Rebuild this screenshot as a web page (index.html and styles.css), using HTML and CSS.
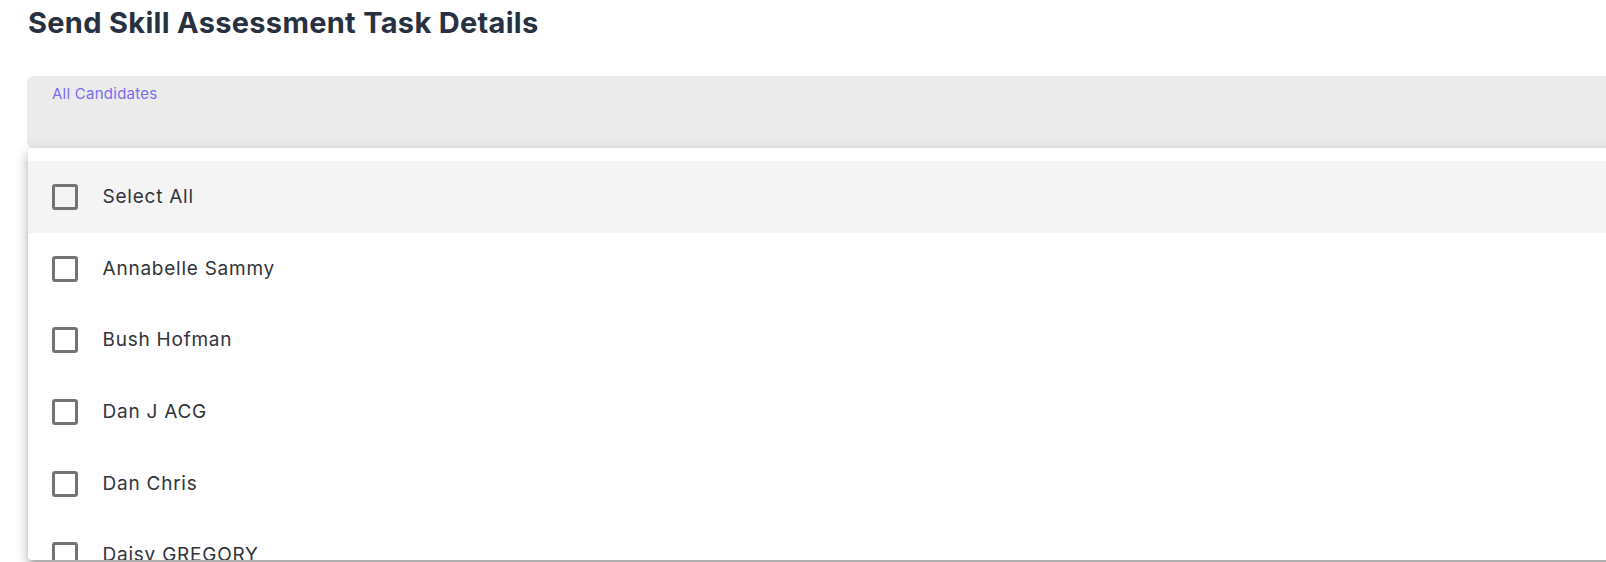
FILE: index.html
```html
<!DOCTYPE html>
<html lang="en">
<head>
<meta charset="utf-8">
<title>Send Skill Assessment Task Details</title>
<link rel="stylesheet" href="styles.css">
</head>
<body>
<main class="page">
  <h1 class="title">Send Skill Assessment Task Details</h1>
  <div class="field">
    <label class="field-label">All Candidates</label>
  </div>
  <div class="menu">
    <ul class="menu-list">
      <li class="option option-hover"><span class="checkbox"></span><span class="option-text">Select All</span></li>
      <li class="option"><span class="checkbox"></span><span class="option-text">Annabelle Sammy</span></li>
      <li class="option"><span class="checkbox"></span><span class="option-text">Bush Hofman</span></li>
      <li class="option"><span class="checkbox"></span><span class="option-text">Dan J ACG</span></li>
      <li class="option"><span class="checkbox"></span><span class="option-text">Dan Chris</span></li>
      <li class="option"><span class="checkbox"></span><span class="option-text">Daisy GREGORY</span></li>
    </ul>
  </div>
</main>
</body>
</html>
```

FILE: styles.css
```css
* { box-sizing: border-box; }

html, body {
  margin: 0;
  padding: 0;
  background: #ffffff;
  overflow: hidden;
  height: 562px;
}

body {
  font-family: Inter, "Noto Sans", "Liberation Sans", sans-serif;
}

.page {
  position: relative;
  padding: 5px 0 0 28px;
  height: 562px;
}

.title {
  margin: 0;
  font-size: 29px;
  line-height: 36px;
  font-weight: 700;
  color: #283142;
  letter-spacing: 0.3px;
}

.field {
  margin-top: 35px;
  margin-left: -1px;
  height: 72px;
  width: 1600px;
  background: #ebebeb;
  border-radius: 6px 0 0 6px;
  padding: 8px 0 0 25px;
}

.field-label {
  display: block;
  font-size: 15px;
  line-height: 20px;
  color: #7b6cf0;
  letter-spacing: 0.25px;
}

.menu {
  position: absolute;
  left: 28px;
  top: 148px;
  width: 1600px;
  height: 412px;
  background: #ffffff;
  border-radius: 4px;
  box-shadow: 0px 5px 5px -3px rgba(0,0,0,0.2), 0px 8px 10px 1px rgba(0,0,0,0.14), 0px 3px 14px 2px rgba(0,0,0,0.12);
  overflow: hidden;
}

.menu-list {
  list-style: none;
  margin: 0;
  padding: 13px 0 0 0;
}

.option {
  display: flex;
  align-items: center;
  height: 71.7px;
  padding-left: 24px;
  gap: 24.6px;
}

.option-hover {
  background: #f4f4f4;
}

.checkbox {
  flex: none;
  width: 26px;
  height: 26px;
  border: 3px solid #737373;
  border-radius: 3px;
}

.option-text {
  font-size: 19px;
  line-height: 24px;
  color: #30343a;
  letter-spacing: 0.75px;
}
```
